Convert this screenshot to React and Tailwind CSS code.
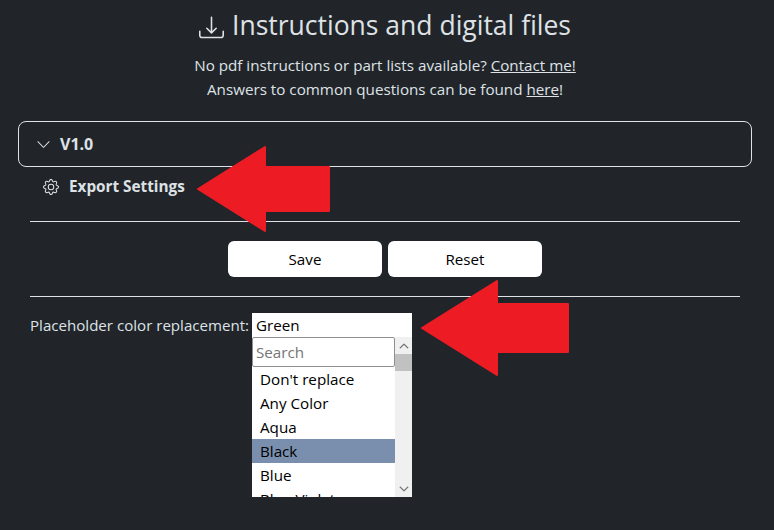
import React from "react";
import { BsChevronDown, BsChevronUp, BsDownload, BsGear } from "react-icons/bs";

const options = ["Don't replace", "Any Color", "Aqua", "Black", "Blue", "Blue Violet"];

function Arrow({ className, width, height, points }) {
  return (
    <svg className={className} width={width} height={height} viewBox={`0 0 ${width} ${height}`}>
      <polygon points={points} fill="#ed1c24" stroke="#ed1c24" strokeWidth="2" strokeLinejoin="round" />
    </svg>
  );
}

function ColorSelect() {
  return (
    <div className="w-40 h-[184px] bg-white text-black overflow-hidden">
      <div className="h-6 px-1 leading-6">Green</div>
      <div className="flex h-[160px]">
        <div className="w-[143px] overflow-hidden">
          <div className="h-[30px] border border-[#8f8f8f] rounded-[2px] px-[3px] leading-7 text-[#757575] box-border">Search</div>
          {options.map((o) => (
            <div key={o} className={`h-6 px-2 leading-6 whitespace-nowrap ${o === "Black" ? "bg-[#7a8fad]" : ""}`}>
              {o}
            </div>
          ))}
        </div>
        <div className="w-[17px] bg-[#f0f0f0] flex flex-col justify-between">
          <div>
            <div className="h-[17px] flex items-center justify-center">
              <BsChevronUp size={10} className="stroke-1" color="#606060" />
            </div>
            <div className="h-[17px] bg-[#c1c1c1]" />
          </div>
          <div className="h-[17px] flex items-center justify-center">
            <BsChevronDown size={10} className="stroke-1" color="#606060" />
          </div>
        </div>
      </div>
    </div>
  );
}

export default function App() {
  return (
    <div className="relative w-[774px] h-[530px] overflow-hidden bg-[#212529] text-[#dee2e6] font-['Open_Sans','Noto_Sans',sans-serif] text-[15.2px]">
      <div className="w-[770px]">
        <div className="flex items-center justify-center gap-2 h-[50px]">
          <BsDownload size={25} className="mt-1" />
          <h1 className="text-[26.5px] leading-[50px] font-normal">Instructions and digital files</h1>
        </div>
        <p className="text-center leading-6 mt-[3px]">
          No pdf instructions or part lists available? <a href="#" className="underline">Contact me!</a>
          <br />
          Answers to common questions can be found <a href="#" className="underline">here</a>!
        </p>

        <div className="mx-[18px] mt-5 h-[46px] border border-[#dee2e6] rounded-lg flex items-center pl-[17px] gap-[9px] font-bold text-base">
          <BsChevronDown size={15} />
          <span>V1.0</span>
        </div>

        <div className="px-[30px]">
          <div className="flex items-center gap-[10px] h-10 pb-px pl-[13px] font-bold text-[15.3px]">
            <BsGear size={16} />
            <span>Export Settings</span>
          </div>
          <hr className="mt-[14px] border-[#dee2e6]" />
          <div className="flex justify-center gap-1.5 mt-[19px]">
            <button className="w-[154px] h-9 bg-white text-black rounded-md">Save</button>
            <button className="w-[154px] h-9 bg-white text-black rounded-md">Reset</button>
          </div>
          <hr className="mt-[19px] border-[#dee2e6]" />
          <div className="flex items-start mt-4">
            <label className="leading-6 w-[222px] whitespace-nowrap text-[15.1px]">Placeholder color replacement:</label>
            <ColorSelect />
          </div>
        </div>
      </div>

      <Arrow
        className="absolute left-[196px] top-[145px]"
        width={136}
        height={88}
        points="2,44 69,2 69,22 133,22 133,66 69,66 69,86"
      />
      <Arrow
        className="absolute left-[420px] top-[279px]"
        width={150}
        height={98}
        points="2,49 77,2 77,25 148,25 148,73 77,73 77,96"
      />
    </div>
  );
}
